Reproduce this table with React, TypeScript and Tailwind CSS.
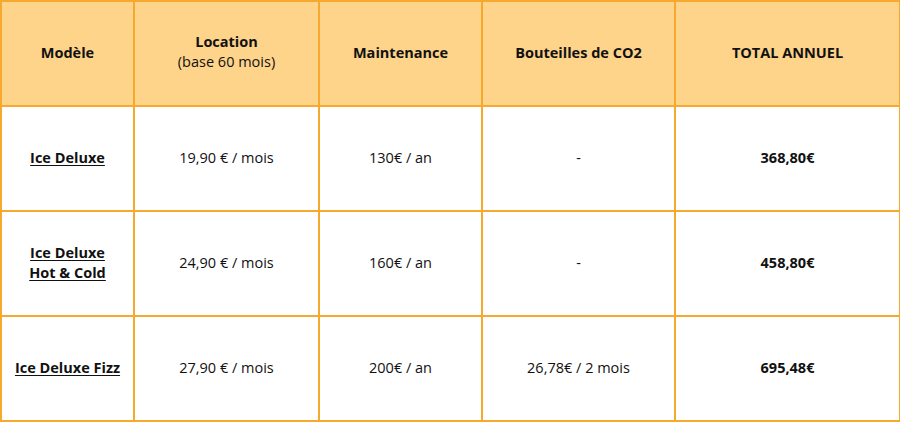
const rows = [
  { name: ["Ice Deluxe"], location: "19,90 € / mois", maint: "130€ / an", co2: "-", total: "368,80€" },
  { name: ["Ice Deluxe", "Hot & Cold"], location: "24,90 € / mois", maint: "160€ / an", co2: "-", total: "458,80€" },
  { name: ["Ice Deluxe Fizz"], location: "27,90 € / mois", maint: "200€ / an", co2: "26,78€ / 2 mois", total: "695,48€" },
];

const cell = "border-2 border-[#f7a92e] text-center align-middle pb-[2px]";

export default function App() {
  return (
    <div className="w-[900px] h-[422px] bg-white font-['Open_Sans',sans-serif] text-[14.5px] leading-[20px] text-[#111]">
      <table className="border-collapse w-[899px] h-[421px] table-fixed">
        <colgroup>
          <col className="w-[133px]" />
          <col className="w-[185px]" />
          <col className="w-[163px]" />
          <col className="w-[193px]" />
          <col className="w-[225px]" />
        </colgroup>
        <thead>
          <tr className="h-[105px] bg-[#fed38a] font-bold">
            <th className={cell}>Modèle</th>
            <th className={cell + " pb-[4px]"}>
              <div>Location</div>
              <div className="font-normal">(base 60 mois)</div>
            </th>
            <th className={cell}>Maintenance</th>
            <th className={cell}>Bouteilles de CO2</th>
            <th className={cell}>TOTAL ANNUEL</th>
          </tr>
        </thead>
        <tbody>
          {rows.map((r) => (
            <tr key={r.total} className="h-[105px]">
              <td className={cell + " font-bold underline underline-offset-2"}>
                {r.name.map((n) => (
                  <div key={n}>{n}</div>
                ))}
              </td>
              <td className={cell}>{r.location}</td>
              <td className={cell}>{r.maint}</td>
              <td className={cell}>{r.co2}</td>
              <td className={cell + " font-bold"}>{r.total}</td>
            </tr>
          ))}
        </tbody>
      </table>
    </div>
  );
}
